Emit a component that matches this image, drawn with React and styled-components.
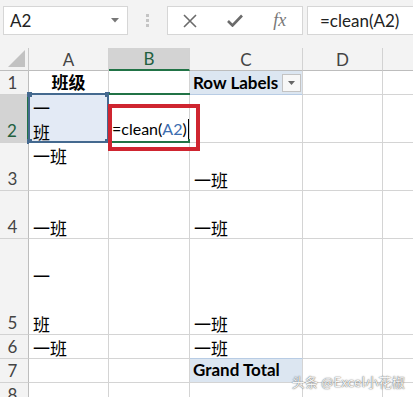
import styled, { createGlobalStyle } from 'styled-components';

const UI = 'Lato, "Noto Sans CJK SC", sans-serif';
const CJK = '"Noto Sans CJK SC", sans-serif';

const GlobalStyle = createGlobalStyle`
  html, body {
    margin: 0;
    padding: 0;
    background: #fff;
  }
  body {
    font-family: ${UI};
  }
`;

const Page = styled.div`
  position: relative;
  width: 413px;
  height: 397px;
  overflow: hidden;
  background: #fff;
  font-family: ${UI};
`;

const Toolbar = styled.div`
  display: flex;
  align-items: flex-start;
  height: 48px;
  padding: 6px 0 0 3px;
  box-sizing: border-box;
  background: #f3f3f3;
`;

const Box = styled.div`
  display: flex;
  align-items: center;
  height: 29px;
  box-sizing: border-box;
  border: 1px solid #d6d6d6;
  background: #fff;
`;

const NameBox = styled(Box)`
  width: 125px;
  justify-content: space-between;
  padding: 0 8px 0 6px;
  font-size: 17px;
  color: #222;
`;

const Grip = styled.div`
  width: 39px;
  display: flex;
  flex-direction: column;
  align-items: center;
  gap: 2px;
  padding-top: 8px;

  span {
    width: 3px;
    height: 3px;
    background: #c4c4c4;
  }
`;

const FxBox = styled(Box)`
  width: 136px;
`;

const IconSlot = styled.div`
  flex: 1;
  display: flex;
  align-items: center;
  justify-content: center;
  color: #6f6f6f;
`;

const FxText = styled.span`
  font-family: "Liberation Serif", serif;
  font-style: italic;
  font-size: 18px;
  color: #777;
`;

const FormulaBox = styled(Box)`
  flex: 1;
  margin-left: 4px;
  border-right: none;
  padding-left: 12px;
  font-size: 17px;
  color: #222;
`;

const Sheet = styled.div`
  display: grid;
  grid-template-columns: 29px 80px 81px 113px 80px 80px;
  grid-template-rows: 23px 24px 48px 48px 48px 96px 24px 24px 24px;
`;

const Corner = styled.div`
  display: flex;
  align-items: flex-end;
  justify-content: flex-end;
  padding: 0 3px 3px 0;
  box-sizing: border-box;
  background: #f3f3f3;
  border-right: 1px solid #c9c9c9;
  border-bottom: 1px solid #bdbdbd;
`;

const ColHead = styled.div`
  display: flex;
  align-items: center;
  justify-content: center;
  box-sizing: border-box;
  background: ${(p) => (p.$active ? '#d3d3d3' : '#f3f3f3')};
  color: ${(p) => (p.$active ? '#22603f' : '#444')};
  border-right: 1px solid #d2d2d2;
  border-bottom: ${(p) => (p.$active ? '2px solid #217346' : '1px solid #bdbdbd')};
  font-size: 17px;
`;

const RowHead = styled.div`
  display: flex;
  align-items: flex-end;
  justify-content: center;
  box-sizing: border-box;
  padding-right: 3px;
  background: ${(p) => (p.$active ? '#d3d3d3' : '#f3f3f3')};
  color: ${(p) => (p.$active ? '#22603f' : '#444')};
  border-right: ${(p) => (p.$active ? '2px solid #217346' : '1px solid #bdbdbd')};
  border-bottom: 1px solid #d2d2d2;
  font-size: 17px;
  line-height: 23px;
`;

const Cell = styled.div`
  position: relative;
  display: flex;
  flex-direction: ${(p) => (p.$row ? 'row' : 'column')};
  justify-content: ${(p) => (p.$top ? 'flex-start' : 'flex-end')};
  align-items: ${(p) => (p.$center ? 'center' : p.$row ? 'flex-end' : 'flex-start')};
  box-sizing: border-box;
  padding: 0 3px;
  border-right: 1px solid #d4d4d4;
  border-bottom: 1px solid ${(p) => p.$line || '#d4d4d4'};
  background: ${(p) => p.$fill || '#fff'};
  font-family: ${(p) => (p.$cjk ? CJK : UI)};
  font-size: 17px;
  font-weight: ${(p) => (p.$bold ? 700 : 400)};
  line-height: 24px;
  white-space: pre-line;
  color: #000;
`;

const CjkText = styled.span`
  margin: ${(p) => (p.$top ? '1px 0 0' : '0 0 -2px')};
  padding-left: 1px;
`;

const FormulaText = styled.span`
  font-size: 16px;
  white-space: nowrap;
  margin-bottom: 1px;
`;

const PivotLabel = styled.span`
  flex: 1;
  line-height: 22px;
`;

const DropButton = styled.div`
  display: flex;
  align-items: center;
  justify-content: center;
  width: 19px;
  height: 18px;
  margin: 0 -2px 2px 0;
  box-sizing: border-box;
  border: 1px solid #c3c3c3;
  background: #f7f7f7;
`;

const RefFrame = styled.div`
  position: absolute;
  top: -2px;
  left: -1px;
  right: -1px;
  bottom: -1px;
  border: 2px solid #44698f;
  pointer-events: none;
`;

const Handle = styled.span`
  position: absolute;
  width: 5px;
  height: 5px;
  background: ${(p) => p.$color};
  ${(p) => (p.$top ? 'top: -3px;' : 'bottom: -3px;')}
  ${(p) => (p.$left ? 'left: -3px;' : 'right: -3px;')}
`;

const ActiveFrame = styled.div`
  position: absolute;
  top: -2px;
  left: 0;
  right: -1px;
  bottom: -1px;
  border-top: 2px solid #217346;
  border-bottom: 2px solid #217346;
  pointer-events: none;
`;

const Ref = styled.span`
  color: #3b6db0;
`;

const Caret = styled.span`
  display: inline-block;
  width: 1px;
  height: 20px;
  margin-left: 1px;
  vertical-align: -4px;
  background: #000;
`;

const Annotation = styled.div`
  position: absolute;
  left: 108px;
  top: 104px;
  width: 92px;
  height: 47px;
  box-sizing: border-box;
  border: 4px solid #cf2530;
  pointer-events: none;
`;

const Watermark = styled.div`
  position: absolute;
  right: 8px;
  bottom: 6px;
  font-family: ${CJK};
  font-size: 13px;
  color: #f4f4f4;
  text-shadow: 0 0 1px #555, 0 0 2px rgba(0, 0, 0, 0.35);
  letter-spacing: 0.2px;
`;

const columns = ['A', 'B', 'C', 'D', ''];
const PIVOT = '#dce6f1';

const Han = ({ text, top }) => (
  <Cell $cjk $top={top}>
    <CjkText $top={top}>{text}</CjkText>
  </Cell>
);

const App = () => {
  return (
    <Page>
      <GlobalStyle />
      <Toolbar>
        <NameBox>
          <span>A2</span>
          <svg width="8" height="5" viewBox="0 0 8 5">
            <polygon points="0,0 8,0 4,4.5" fill="#777" />
          </svg>
        </NameBox>
        <Grip>
          <span />
          <span />
          <span />
        </Grip>
        <FxBox>
          <IconSlot>
            <svg width="14" height="14" viewBox="0 0 14 14">
              <path d="M1 1 L13 13 M13 1 L1 13" stroke="#6b6b6b" strokeWidth="1.6" />
            </svg>
          </IconSlot>
          <IconSlot>
            <svg width="16" height="13" viewBox="0 0 16 13">
              <path d="M1 7 L5.5 11.5 L15 1.5" stroke="#6b6b6b" strokeWidth="2.6" fill="none" />
            </svg>
          </IconSlot>
          <IconSlot>
            <FxText>fx</FxText>
          </IconSlot>
        </FxBox>
        <FormulaBox>=clean(A2)</FormulaBox>
      </Toolbar>

      <Sheet>
        <Corner>
          <svg width="17" height="17" viewBox="0 0 17 17">
            <polygon points="17,0 17,17 0,17" fill="#c2c2c2" />
          </svg>
        </Corner>
        {columns.map((c, i) => (
          <ColHead key={i} $active={c === 'B'}>
            {c}
          </ColHead>
        ))}

        <RowHead>1</RowHead>
        <Cell $cjk $bold $center>班级</Cell>
        <Cell $line="#217346" />
        <Cell $row $fill={PIVOT} $bold $line="#b8cce4">
          <PivotLabel>Row Labels</PivotLabel>
          <DropButton>
            <svg width="7" height="4" viewBox="0 0 7 4">
              <polygon points="0,0 7,0 3.5,4" fill="#666" />
            </svg>
          </DropButton>
        </Cell>
        <Cell />
        <Cell />

        <RowHead $active>2</RowHead>
        <Cell $cjk $fill="#e3eaf5">
          <CjkText>{'一\n班'}</CjkText>
          <RefFrame>
            <Handle $color="#44698f" $top $left />
            <Handle $color="#44698f" $top />
            <Handle $color="#44698f" $left />
            <Handle $color="#44698f" />
          </RefFrame>
        </Cell>
        <Cell>
          <FormulaText>
            =clean(<Ref>A2</Ref>)<Caret />
          </FormulaText>
          <ActiveFrame>
            <Handle $color="#217346" />
          </ActiveFrame>
        </Cell>
        <Cell />
        <Cell />
        <Cell />

        <RowHead>3</RowHead>
        <Han text="一班" top />
        <Cell />
        <Han text="一班" />
        <Cell />
        <Cell />

        <RowHead>4</RowHead>
        <Han text="一班" />
        <Cell />
        <Han text="一班" />
        <Cell />
        <Cell />

        <RowHead>5</RowHead>
        <Han text={'一\n\n班'} />
        <Cell />
        <Han text="一班" />
        <Cell />
        <Cell />

        <RowHead>6</RowHead>
        <Han text="一班" />
        <Cell />
        <Cell $cjk $line="#b8cce4">
          <CjkText>一班</CjkText>
        </Cell>
        <Cell />
        <Cell />

        <RowHead>7</RowHead>
        <Cell />
        <Cell />
        <Cell $fill={PIVOT} $bold>Grand Total</Cell>
        <Cell />
        <Cell />

        <RowHead>8</RowHead>
        <Cell />
        <Cell />
        <Cell />
        <Cell />
        <Cell />
      </Sheet>

      <Annotation />
      <Watermark>头条 @Excel小花椒</Watermark>
    </Page>
  );
};

export default App;
